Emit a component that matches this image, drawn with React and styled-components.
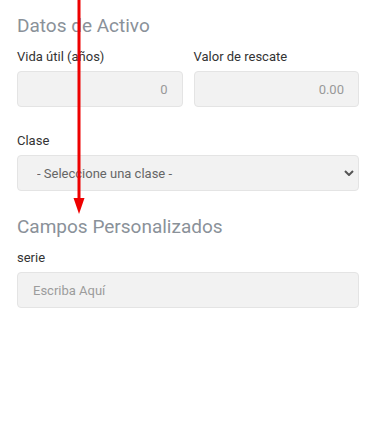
import React from "react";
import styled, { createGlobalStyle } from "styled-components";

const GlobalStyle = createGlobalStyle`
  html, body {
    margin: 0;
    padding: 0;
    background: #fff;
  }
  body {
    font-family: Roboto, "Liberation Sans", sans-serif;
  }
  * {
    box-sizing: border-box;
  }
`;

const Page = styled.div`
  position: relative;
  width: 370px;
  height: 431px;
  padding: 14px 11px 0 17px;
  overflow: hidden;
`;

const SectionTitle = styled.h3`
  margin: 0 0 10px;
  font-size: 19px;
  font-weight: 400;
  line-height: 23px;
  color: #8a9199;
`;

const Row = styled.div`
  display: grid;
  grid-template-columns: 1fr 1fr;
  column-gap: 11px;
  margin-bottom: 24px;
`;

const Field = styled.div`
  display: flex;
  flex-direction: column;
  margin-bottom: ${(p) => p.$mb || 0}px;
`;

const Label = styled.label`
  font-size: 13px;
  line-height: 20px;
  color: #333;
  margin-bottom: 4px;
`;

const Input = styled.input`
  width: 100%;
  height: 36px;
  padding: 0 14px 0 15px;
  font-family: inherit;
  font-size: 13px;
  color: #999;
  text-align: ${(p) => p.$align || "left"};
  background: #f2f2f2;
  border: 1px solid #e4e4e4;
  border-radius: 4px;
  outline: none;

  &::placeholder {
    color: #9c9c9c;
  }
`;

const SelectWrap = styled.div`
  position: relative;
`;

const Select = styled.select`
  appearance: none;
  width: 100%;
  height: 36px;
  padding: 0 30px 0 19px;
  font-family: inherit;
  font-size: 13px;
  color: #666;
  background: #f2f2f2;
  border: 1px solid #e4e4e4;
  border-radius: 4px;
  outline: none;
`;

const Chevron = styled.svg`
  position: absolute;
  right: 5px;
  top: 15px;
  width: 10px;
  height: 6px;
  pointer-events: none;
`;

const Arrow = styled.svg`
  position: absolute;
  left: 73px;
  top: 0;
  pointer-events: none;
`;

export default function App() {
  return (
    <>
      <GlobalStyle />
      <Page>
        <SectionTitle>Datos de Activo</SectionTitle>
        <Row>
          <Field>
            <Label>Vida útil (años)</Label>
            <Input $align="right" defaultValue="0" readOnly />
          </Field>
          <Field>
            <Label>Valor de rescate</Label>
            <Input $align="right" defaultValue="0.00" readOnly />
          </Field>
        </Row>
        <Field $mb={24}>
          <Label>Clase</Label>
          <SelectWrap>
            <Select defaultValue="">
              <option value="">- Seleccione una clase -</option>
            </Select>
            <Chevron viewBox="0 0 10 6">
              <path d="M1 1l4 4 4-4" fill="none" stroke="#555" strokeWidth="2" />
            </Chevron>
          </SelectWrap>
        </Field>
        <SectionTitle>Campos Personalizados</SectionTitle>
        <Field>
          <Label>serie</Label>
          <Input placeholder="Escriba Aquí" />
        </Field>
        <Arrow width="12" height="215" viewBox="0 0 12 215">
          <rect x="4.5" y="0" width="3" height="200" fill="#ee0000" />
          <polygon points="0.5,198 11.5,198 6,214" fill="#ee0000" />
        </Arrow>
      </Page>
    </>
  );
}
